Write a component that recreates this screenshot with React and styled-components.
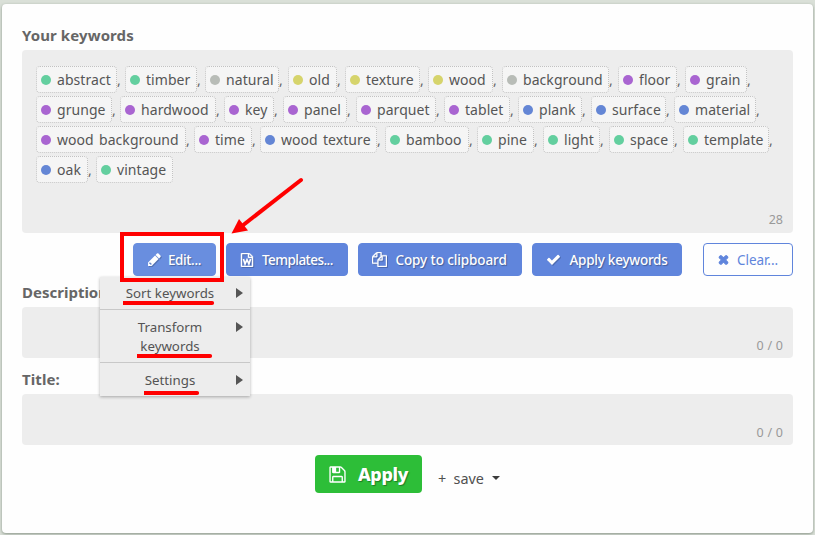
import React from "react";
import styled, { createGlobalStyle } from "styled-components";

const Global = createGlobalStyle`
  * { box-sizing: border-box; }
  body {
    margin: 0;
    background: #dae0d8;
    font-family: "Noto Sans", sans-serif;
    color: #505050;
    overflow: hidden;
  }
`;

const Card = styled.main`
  position: relative;
  width: 811px;
  height: 529px;
  margin: 4px 2px 2px;
  padding: 21px 20px 0;
  background: #fefefe;
  border-radius: 4px;
  box-shadow: 0 1px 3px rgba(60, 75, 60, 0.5);
`;

const Label = styled.h2`
  margin: 0;
  height: ${(p) => p.$h}px;
  padding-top: ${(p) => p.$top || 0}px;
  line-height: 21px;
  font-size: 15px;
  font-weight: 700;
  letter-spacing: ${(p) => p.$track || 0}px;
  color: #666;
  white-space: nowrap;
`;

const KeywordBox = styled.section`
  display: flex;
  flex-direction: column;
  justify-content: space-between;
  height: 183px;
  padding: 16px 10px 3px 14px;
  background: #ededed;
  border-radius: 4px;
`;

const Rows = styled.div`
  display: flex;
  flex-direction: column;
  gap: 3px;
`;

const ChipRow = styled.div`
  display: flex;
`;

const Slot = styled.span`
  display: flex;
  align-items: center;
  width: ${(p) => p.$w}px;
  height: 27px;
  font-size: 14px;
  color: #666;
`;

const Chip = styled.span`
  display: flex;
  align-items: center;
  flex: none;
  width: ${(p) => p.$w}px;
  height: 27px;
  padding-left: 4px;
  background: #f5f5f5;
  border: 1px dotted #c2c2c2;
  border-radius: 4px;
  color: #565656;
  font-size: 14px;
  line-height: 20px;
  letter-spacing: 0.06px;
  word-spacing: 1.5px;
  white-space: nowrap;
`;

const Dot = styled.i`
  flex: none;
  width: 10px;
  height: 10px;
  margin-right: 6px;
  border-radius: 50%;
  background: ${(p) => p.$c};
`;

const Count = styled.div`
  text-align: right;
  font-size: 12.5px;
  line-height: 21px;
  word-spacing: 0.5px;
  color: #999;
`;

const Toolbar = styled.div`
  display: flex;
  justify-content: flex-end;
  padding-top: 10px;
  height: 49px;
`;

const Button = styled.button`
  display: flex;
  align-items: center;
  width: ${(p) => p.$w}px;
  height: 33px;
  margin: 0 0 0 ${(p) => p.$gap || 10}px;
  padding: 0 0 0 13px;
  border: 1px solid ${(p) => (p.$light ? "#698edf" : "#6085dc")};
  border-radius: 4px;
  background: ${(p) => (p.$outline ? "#fefefe" : p.$light ? "#698edf" : "#6085dc")};
  color: ${(p) => (p.$outline ? "#6085dc" : "#fff")};
  font-family: inherit;
  font-size: 13.5px;
  font-weight: ${(p) => (p.$outline ? 400 : 500)};
  letter-spacing: ${(p) => p.$track || 0}px;
  text-shadow: ${(p) => (p.$outline ? "none" : "1px 1px 1px rgba(0,0,0,.3)")};
  white-space: nowrap;

  svg {
    flex: none;
    margin-right: ${(p) => p.$ig || 7}px;
    filter: ${(p) => (p.$outline ? "none" : "drop-shadow(1px 1px 0 rgba(0,0,0,.2))")};
  }
`;

const Field = styled.section`
  height: 51px;
  padding: 28px 10px 0;
  background: #ededed;
  border-radius: 4px;
`;

const Footer = styled.footer`
  display: flex;
  padding: 10px 0 0 293px;
`;

const ApplyButton = styled.button`
  display: flex;
  align-items: center;
  width: 107px;
  height: 38px;
  padding: 0 0 0 13px;
  border: 0;
  border-radius: 4px;
  background: #2dbe38;
  color: #fff;
  font: 800 18px "Noto Sans", sans-serif;
  letter-spacing: -0.4px;
  text-shadow: 1px 1px 1px rgba(0, 0, 0, 0.35);

  svg { margin-right: 11px; }
`;

const Save = styled.span`
  display: flex;
  align-items: center;
  height: 22px;
  margin: 12px 0 0 16px;
  font-size: 14.4px;

  b { font-weight: 400; width: 15.5px; }
`;

const Caret = styled.i`
  margin: 0 0 0 8px;
  border: 4.5px solid transparent;
  border-top-color: #3c3c3c;
  border-bottom: 0;
`;

const Menu = styled.nav`
  position: absolute;
  left: 98px;
  top: 273px;
  width: 150px;
  height: 119px;
  background: #ededed;
  box-shadow: 0 1px 3px rgba(0, 0, 0, 0.3);
`;

const MenuItem = styled.div`
  display: flex;
  height: ${(p) => p.$h}px;
  padding: ${(p) => p.$top}px 7px 0 20px;
  border-top: ${(p) => (p.$line ? "1px solid #c8c8c8" : "0")};
  font-size: 13.3px;
  line-height: 19px;
  color: #545454;

  span { flex: 1; width: 0; text-align: center; }
`;

const Arrow = styled.i`
  height: 0;
  margin: 4px 0 0 16px;
  border: 5px solid transparent;
  border-left: 7px solid #555;
  border-right: 0;
`;

const Marks = styled.svg`
  position: absolute;
  left: -2px;
  top: -4px;
  pointer-events: none;
`;

const paths = {
  pencil: "M491 1536l91-91-235-235-91 91v107h128v128h107zM960 416l416 416-832 832h-416v-416zm683 96q0 53-37 90l-166 166-416-416 166-165q36-38 90-38 53 0 91 38l235 234q37 39 37 91z",
  word: "M1596 380q28 28 48 76t20 88v1152q0 40-28 68t-68 28h-1344q-40 0-68-28t-28-68v-1600q0-40 28-68t68-28h896q40 0 88 20t76 48zm-444-244v376h376q-10-29-22-41l-313-313q-12-12-41-22zm384 1528v-1024h-416q-40 0-68-28t-28-68v-416h-768v1536h1280z",
  copy: "M1696 384q40 0 68 28t28 68v1216q0 40-28 68t-68 28h-960q-40 0-68-28t-28-68v-288h-544q-40 0-68-28t-28-68v-672q0-40 20-88t48-76l408-408q28-28 76-48t88-20h416q40 0 68 28t28 68v328q68-40 128-40h416zm-544 213l-299 299h299v-299zm-640-384l-299 299h299v-299zm196 647l316-316v-416h-384v416q0 40-28 68t-68 28h-416v640h512v-256q0-40 20-88t48-76zm956 804v-1152h-384v416q0 40-28 68t-68 28h-416v640h896z",
  check: "M1671 566q0 40-28 68l-724 724-136 136q-28 28-68 28t-68-28l-136-136-362-362q-28-28-28-68t28-68l136-136q28-28 68-28t68 28l294 295 656-657q28-28 68-28t68 28l136 136q28 28 28 68z",
  times: "M1490 1322q0 40-28 68l-136 136q-28 28-68 28t-68-28l-294-294-294 294q-28 28-68 28t-68-28l-136-136q-28-28-28-68t28-68l294-294-294-294q-28-28-28-68t28-68l136-136q28-28 68-28t68 28l294 294 294-294q28-28 68-28t68 28l136 136q28 28 28 68t-28 68l-294 294 294 294q28 28 28 68z",
  save: "M512 1536h768v-384h-768v384zm896 0h128v-896q0-14-10-38.5t-20-34.5l-281-281q-10-10-34-20t-39-10v416q0 40-28 68t-68 28h-576q-40 0-68-28t-28-68v-416h-128v1280h128v-416q0-40 28-68t68-28h832q40 0 68 28t28 68v416zm-384-928v-320q0-13-9.5-22.5t-22.5-9.5h-192q-13 0-22.5 9.5t-9.5 22.5v320q0 13 9.5 22.5t22.5 9.5h192q13 0 22.5-9.5t9.5-22.5zm640 32v928q0 40-28 68t-68 28h-1344q-40 0-68-28t-28-68v-1344q0-40 28-68t68-28h928q40 0 88 20t76 48l280 280q28 28 48 76t20 88z",
};

function Icon({ name, size = 15, weight = 0 }) {
  return (
    <svg width={size} height={size} viewBox="0 0 1792 1792" fill="currentColor">
      <path d={paths[name]} stroke="currentColor" strokeWidth={weight} />
      {name === "word" && (
        <polyline points="440,760 650,1400 896,850 1142,1400 1352,760" fill="none" stroke="currentColor" strokeWidth="210" />
      )}
    </svg>
  );
}

const G = "#63cf9f";
const P = "#a965d1";
const B = "#6486d5";
const Y = "#d6d46c";
const N = "#b8bcb7";

// [keyword, dot colour, left edge, right edge]
const rows = [
  [["abstract", G, 36, 117], ["timber", G, 125, 197], ["natural", N, 205, 279], ["old", Y, 288, 337], ["texture", Y, 345, 420], ["wood", Y, 428, 493], ["background", N, 502, 609], ["floor", P, 618, 677], ["grain", P, 685, 747]],
  [["grunge", P, 36, 112], ["hardwood", P, 120, 216], ["key", P, 224, 274], ["panel", P, 283, 347], ["parquet", P, 356, 436], ["tablet", P, 444, 510], ["plank", B, 518, 582], ["surface", B, 591, 666], ["material", B, 674, 756]],
  [["wood background", P, 36, 186], ["time", P, 194, 252], ["wood texture", B, 260, 377], ["bamboo", G, 385, 469], ["pine", G, 477, 534], ["light", G, 543, 600], ["space", G, 609, 674], ["template", G, 683, 769]],
  [["oak", B, 36, 88], ["vintage", G, 96, 173]],
];

export default function App() {
  return (
    <>
      <Global />
      <Card>
        <Label $h={25} $track={0.1}>Your keywords</Label>
        <KeywordBox>
          <Rows>
            {rows.map((row, r) => (
              <ChipRow key={r}>
                {row.map(([word, color, x, end], i) => {
                  const next = row[i + 1];
                  return (
                    <Slot key={word} $w={(next ? next[2] : end + 8) - x}>
                      <Chip $w={end - x}>
                        <Dot $c={color} />
                        {word}
                      </Chip>
                      {word !== "vintage" && ","}
                    </Slot>
                  );
                })}
              </ChipRow>
            ))}
          </Rows>
          <Count>28</Count>
        </KeywordBox>
        <Toolbar>
          <Button $w={83} $track={-0.4} $ig={6} $light><Icon name="pencil" />Edit...</Button>
          <Button $w={122} $track={-0.55} $ig={8}><Icon name="word" size={14} weight={60} />Templates...</Button>
          <Button $w={164} $track={-0.1} $ig={8.5}><Icon name="copy" weight={40} />Copy to clipboard</Button>
          <Button $w={150} $track={-0.25} $ig={8.5}><Icon name="check" />Apply keywords</Button>
          <Button $w={90} $track={-0.05} $gap={21} $outline><Icon name="times" size={13} weight={160} />Clear...</Button>
        </Toolbar>
        <Label $h={25}>Description:</Label>
        <Field><Count>0 / 0</Count></Field>
        <Label $h={36} $top={11} $track={0.1}>Title:</Label>
        <Field><Count>0 / 0</Count></Field>
        <Footer>
          <ApplyButton><Icon name="save" size={19} />Apply</ApplyButton>
          <Save><b>+</b>save<Caret /></Save>
        </Footer>
        <Menu>
          <MenuItem $h={32} $top={7}><span>Sort keywords</span><Arrow /></MenuItem>
          <MenuItem $h={53} $top={8} $line><span>Transform keywords</span><Arrow /></MenuItem>
          <MenuItem $h={33} $top={8} $line><span>Settings</span><Arrow /></MenuItem>
        </Menu>
        <Marks width="815" height="535" fill="none" stroke="#f00">
          <rect x="122" y="234" width="100" height="46" strokeWidth="4" />
          <path d="M301 180L242 226" strokeWidth="4" strokeLinecap="round" />
          <path d="M231.5 233.5L239 219L248 230.5Z" fill="#f00" stroke="none" />
          <path d="M123 303H212M137 356H210M144 393H197" strokeWidth="4" />
          <path d="M212 303h.1M210 356h.1M197 393h.1" strokeWidth="4" strokeLinecap="round" />
        </Marks>
      </Card>
    </>
  );
}
